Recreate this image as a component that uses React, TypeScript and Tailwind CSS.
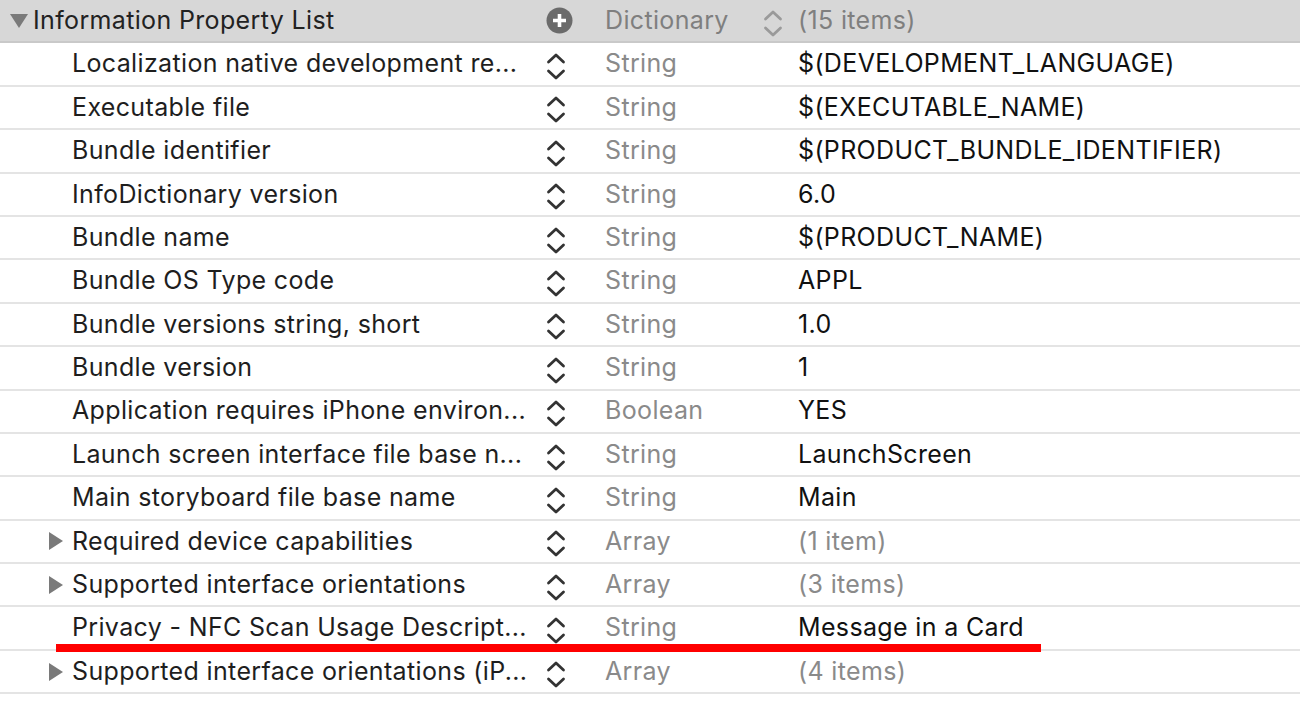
import React from "react";

type Row = {
  key: string;
  type: string;
  value: string;
  expand?: boolean;
  grayValue?: boolean;
  highlight?: boolean;
};

const rows: Row[] = [
  { key: "Localization native development re...", type: "String", value: "$(DEVELOPMENT_LANGUAGE)" },
  { key: "Executable file", type: "String", value: "$(EXECUTABLE_NAME)" },
  { key: "Bundle identifier", type: "String", value: "$(PRODUCT_BUNDLE_IDENTIFIER)" },
  { key: "InfoDictionary version", type: "String", value: "6.0" },
  { key: "Bundle name", type: "String", value: "$(PRODUCT_NAME)" },
  { key: "Bundle OS Type code", type: "String", value: "APPL" },
  { key: "Bundle versions string, short", type: "String", value: "1.0" },
  { key: "Bundle version", type: "String", value: "1" },
  { key: "Application requires iPhone environ...", type: "Boolean", value: "YES" },
  { key: "Launch screen interface file base n...", type: "String", value: "LaunchScreen" },
  { key: "Main storyboard file base name", type: "String", value: "Main" },
  { key: "Required device capabilities", type: "Array", value: "(1 item)", expand: true, grayValue: true },
  { key: "Supported interface orientations", type: "Array", value: "(3 items)", expand: true, grayValue: true },
  { key: "Privacy - NFC Scan Usage Descript...", type: "String", value: "Message in a Card", highlight: true },
  { key: "Supported interface orientations (iP...", type: "Array", value: "(4 items)", expand: true, grayValue: true },
];

function Stepper({ color }: { color: string }) {
  return (
    <svg width="22" height="30" viewBox="0 0 22 30" fill="none" className="mt-[6px]">
      <path d="M3.5 10 L11 3 L18.5 10" stroke={color} strokeWidth="2.8" strokeLinecap="round" strokeLinejoin="round" />
      <path d="M3.5 19 L11 26 L18.5 19" stroke={color} strokeWidth="2.8" strokeLinecap="round" strokeLinejoin="round" />
    </svg>
  );
}

function RightTriangle() {
  return (
    <svg width="16" height="20" viewBox="0 0 16 20">
      <path d="M1 1 L15 10 L1 19 Z" fill="#7a7a7a" />
    </svg>
  );
}

function DownTriangle() {
  return (
    <svg width="20" height="16" viewBox="0 0 20 16">
      <path d="M1 1 L19 1 L10 15 Z" fill="#7a7a7a" />
    </svg>
  );
}

function PlusCircle() {
  return (
    <svg width="27" height="27" viewBox="0 0 27 27">
      <circle cx="13.5" cy="13.5" r="13" fill="#6b6b6b" />
      <path d="M13.5 7 V20 M7 13.5 H20" stroke="#ffffff" strokeWidth="3.6" />
    </svg>
  );
}

export default function App() {
  return (
    <div
      className="w-[1300px] h-[718px] bg-white overflow-hidden relative tracking-[0.35px]"
      style={{ fontFamily: 'Inter, "Liberation Sans", Arial, sans-serif' }}
    >
      <div className="flex items-center h-[43.4px] bg-[#d7d7d7] border-b-2 border-[#c9c9c9] text-[25px]">
        <div className="w-[33px] flex justify-center pl-[4px]">
          <DownTriangle />
        </div>
        <div className="w-[512px] text-[#222222] whitespace-nowrap">Information Property List</div>
        <div className="w-[60px] flex justify-start pl-[1px]">
          <PlusCircle />
        </div>
        <div className="w-[147px] text-[#7f7f7f]">Dictionary</div>
        <div className="w-[46px] flex justify-start pl-[10px]">
          <Stepper color="#9a9a9a" />
        </div>
        <div className="text-[#7f7f7f]">(15 items)</div>
      </div>
      {rows.map((r, i) => (
        <div key={i} className="flex items-center h-[43.4px] border-b-2 border-[#e4e4e4] text-[25px] relative">
          <div className="w-[72px] flex justify-end pr-[8px]">{r.expand ? <RightTriangle /> : null}</div>
          <div className="w-[473px] text-[#1e1e1e] whitespace-nowrap">{r.key}</div>
          <div className="w-[60px] flex justify-start">
            <Stepper color="#333333" />
          </div>
          <div className="w-[193px] text-[#8a8a8a]">{r.type}</div>
          <div className={r.grayValue ? "text-[#8a8a8a]" : "text-[#111111]"}>{r.value}</div>
          {r.highlight ? (
            <div className="absolute left-[56px] top-[37px] w-[985px] h-[8px] bg-[#ff0000]" />
          ) : null}
        </div>
      ))}
    </div>
  );
}
